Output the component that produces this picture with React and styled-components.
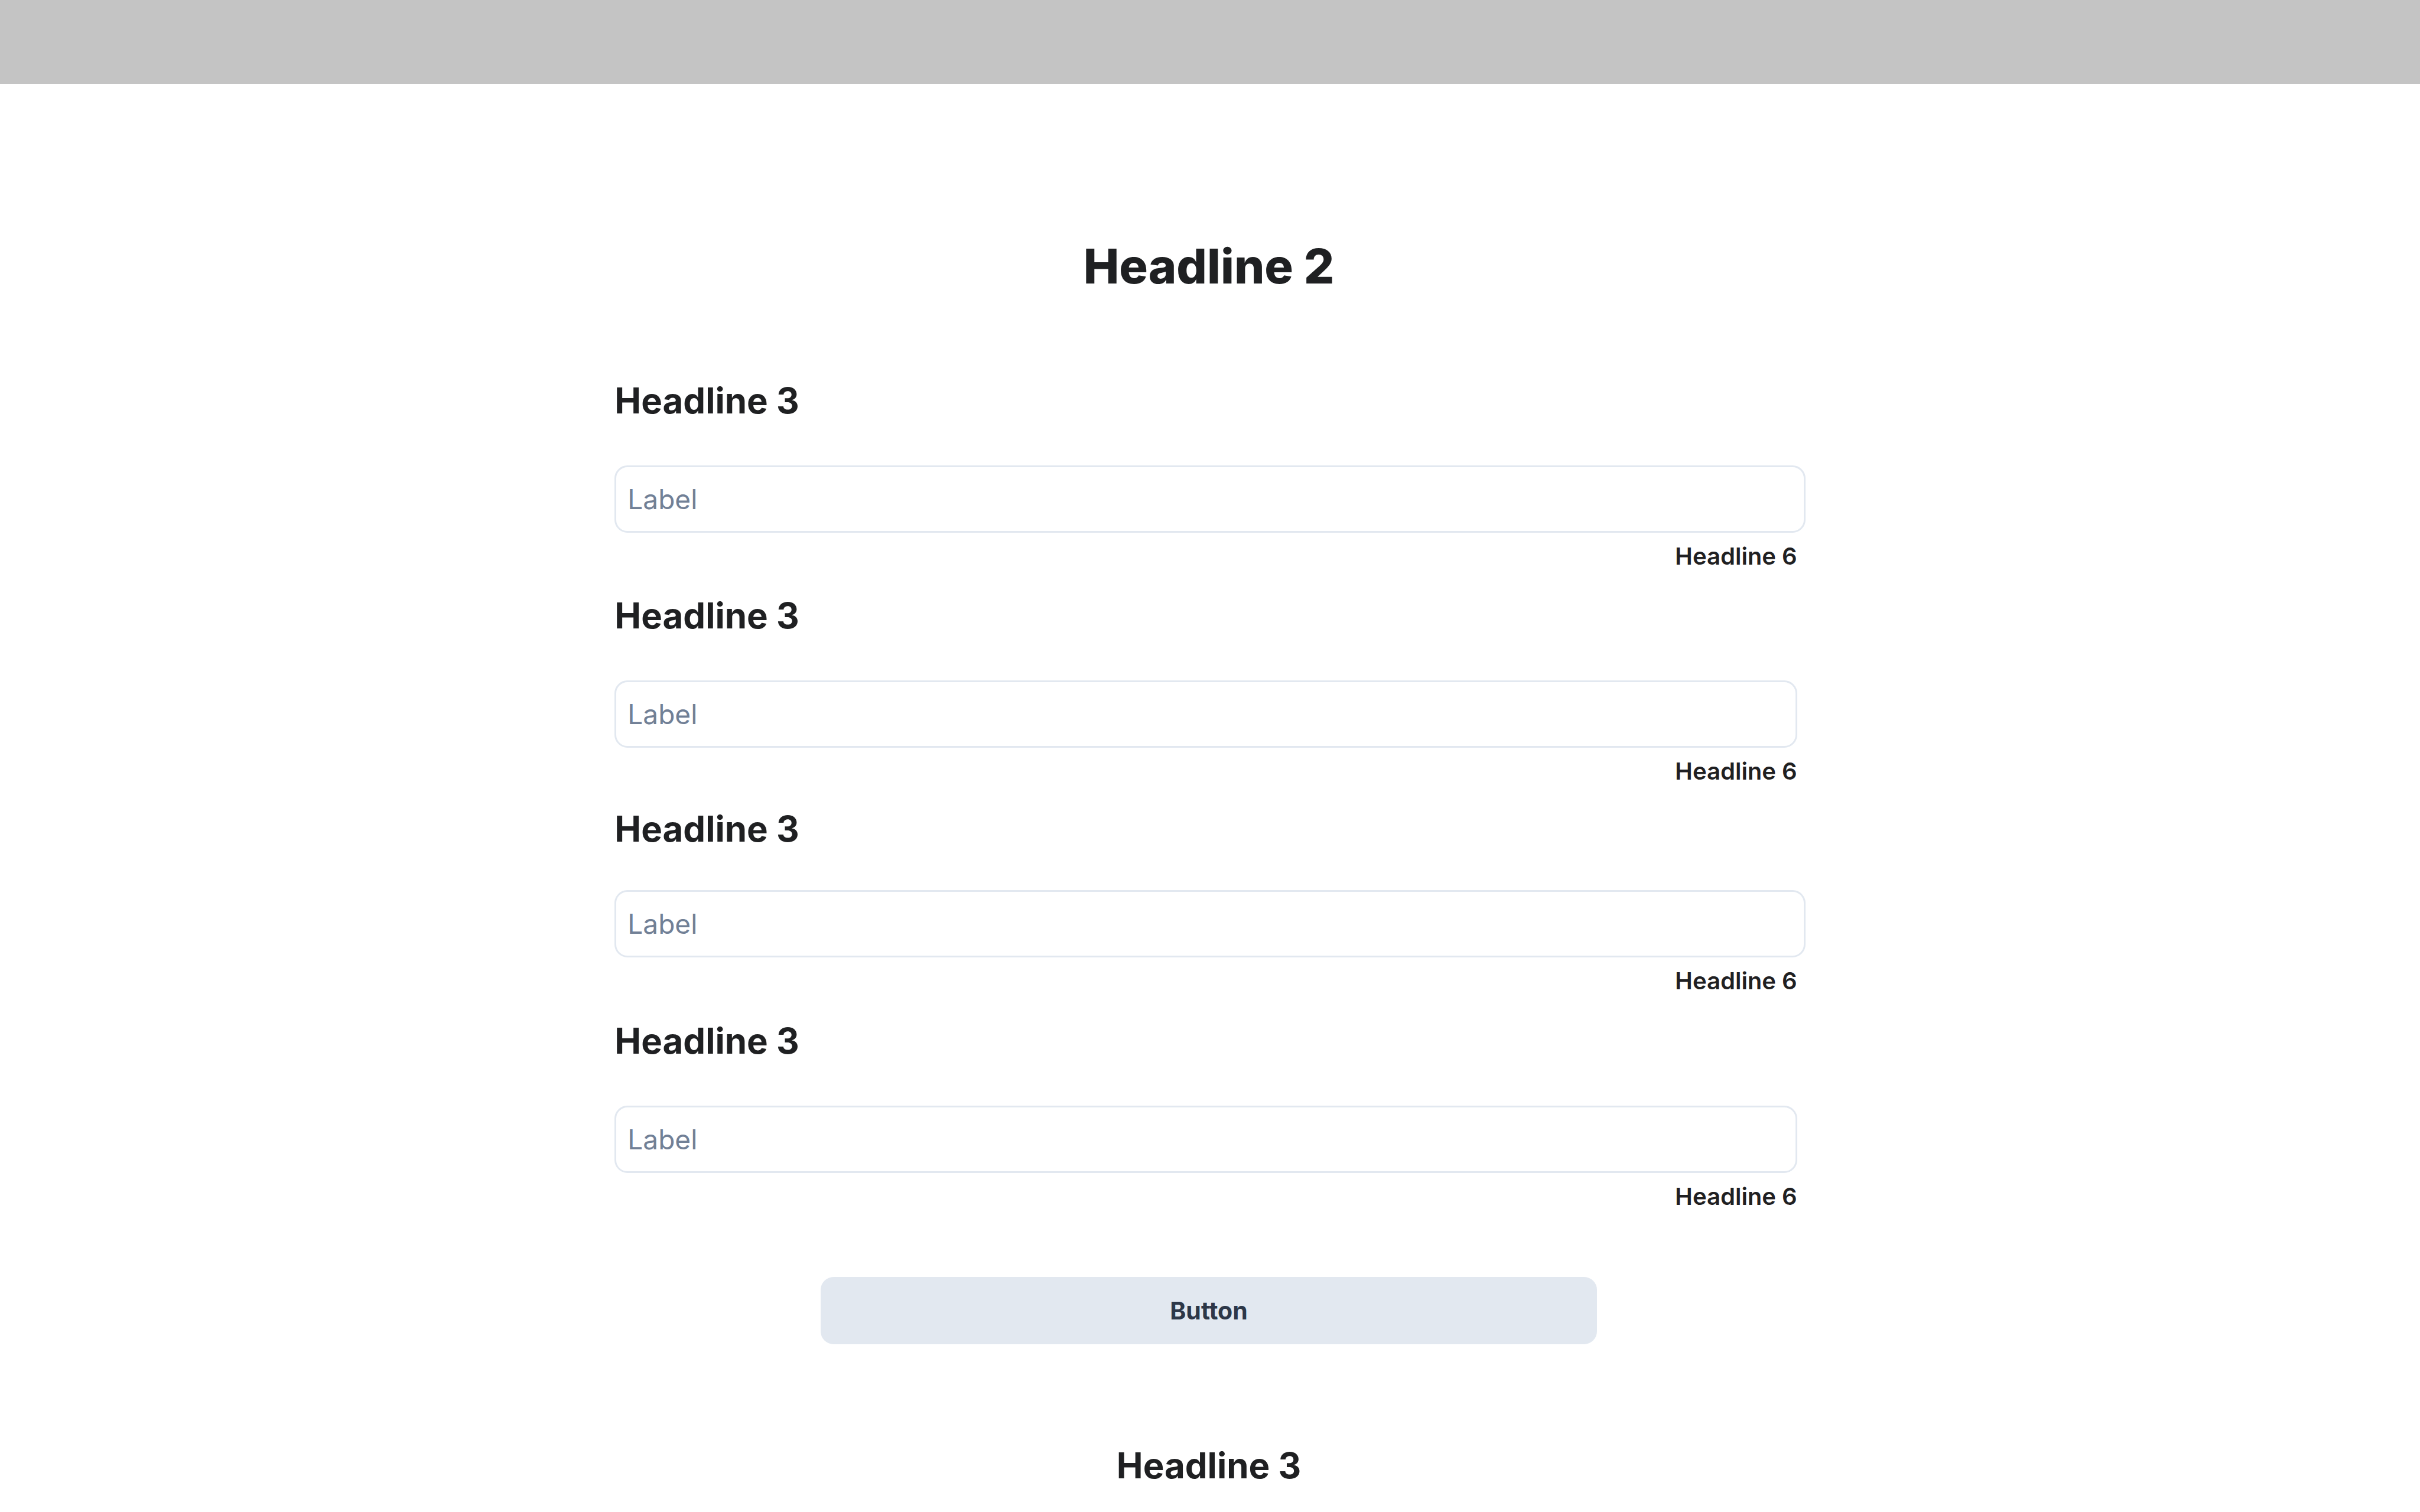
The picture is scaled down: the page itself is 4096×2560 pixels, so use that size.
import React, { useId } from "react";
import styled, { createGlobalStyle } from "styled-components";

const GlobalStyle = createGlobalStyle`
  *, *::before, *::after { box-sizing: border-box; }
  body { margin: 0; background: #fff; color: #1f2022; font-family: Inter, "Liberation Sans", sans-serif; }
`;

const Header = styled.header`
  height: 142px;
  background: #c4c4c4;
`;

const Page = styled.main`
  display: flex;
  flex-direction: column;
  align-items: center;
  padding: 253px 4px 0 0;
`;

const Title = styled.h1`
  margin: 0;
  font-size: 81px;
  line-height: 112px;
  font-weight: 800;
`;

const Heading = styled.h2`
  margin: 0;
  font-size: 60px;
  line-height: 80px;
  font-weight: 700;
`;

const Form = styled.form`
  display: flex;
  flex-direction: column;
  align-items: center;
  width: 100%;
  margin-top: 131px;
`;

const Fields = styled.div`
  width: 49.25%;
  margin-left: 4px;
`;

const Field = styled.div`
  display: flex;
  flex-direction: column;
  margin-bottom: ${(p) => p.$after}px;
`;

const TextBox = styled.input`
  width: ${(p) => (p.$wide ? "100%" : "calc(100% - 14px)")};
  height: 114px;
  margin-top: ${(p) => p.$gap}px;
  padding: 0 19px;
  border: 3px solid #e2e8f0;
  border-radius: 22px;
  background: #fff;
  font-family: inherit;
  font-size: 46px;
  color: inherit;
  &::placeholder { color: #718096; opacity: 1; }
`;

const Hint = styled.p`
  margin: 14px 14px 0 0;
  font-size: 40px;
  line-height: 52px;
  font-weight: 600;
  text-align: right;
`;

const SubmitButton = styled.button`
  width: 1314px;
  max-width: 100%;
  height: 114px;
  border: 0;
  border-radius: 22px;
  background: #e2e8f0;
  color: #2d3748;
  font-family: inherit;
  font-size: 41px;
  font-weight: 700;
`;

const Footer = styled.section`
  margin-top: 165px;
`;

const fields = [
  { wide: true, gap: 70, after: 34 },
  { wide: false, gap: 70, after: 31 },
  { wide: true, gap: 64, after: 35 },
  { wide: false, gap: 70, after: 110 },
];

function FormField({ wide, gap, after }) {
  const id = useId();
  return (
    <Field $after={after}>
      <Heading as="label" htmlFor={id}>Headline 3</Heading>
      <TextBox id={id} type="text" placeholder="Label" $wide={wide} $gap={gap} />
      <Hint>Headline 6</Hint>
    </Field>
  );
}

export default function App() {
  return (
    <>
      <GlobalStyle />
      <Header />
      <Page>
        <Title>Headline 2</Title>
        <Form onSubmit={(e) => e.preventDefault()}>
          <Fields>
            {fields.map((field, i) => <FormField key={i} {...field} />)}
          </Fields>
          <SubmitButton type="submit">Button</SubmitButton>
        </Form>
        <Footer><Heading>Headline 3</Heading></Footer>
      </Page>
    </>
  );
}
